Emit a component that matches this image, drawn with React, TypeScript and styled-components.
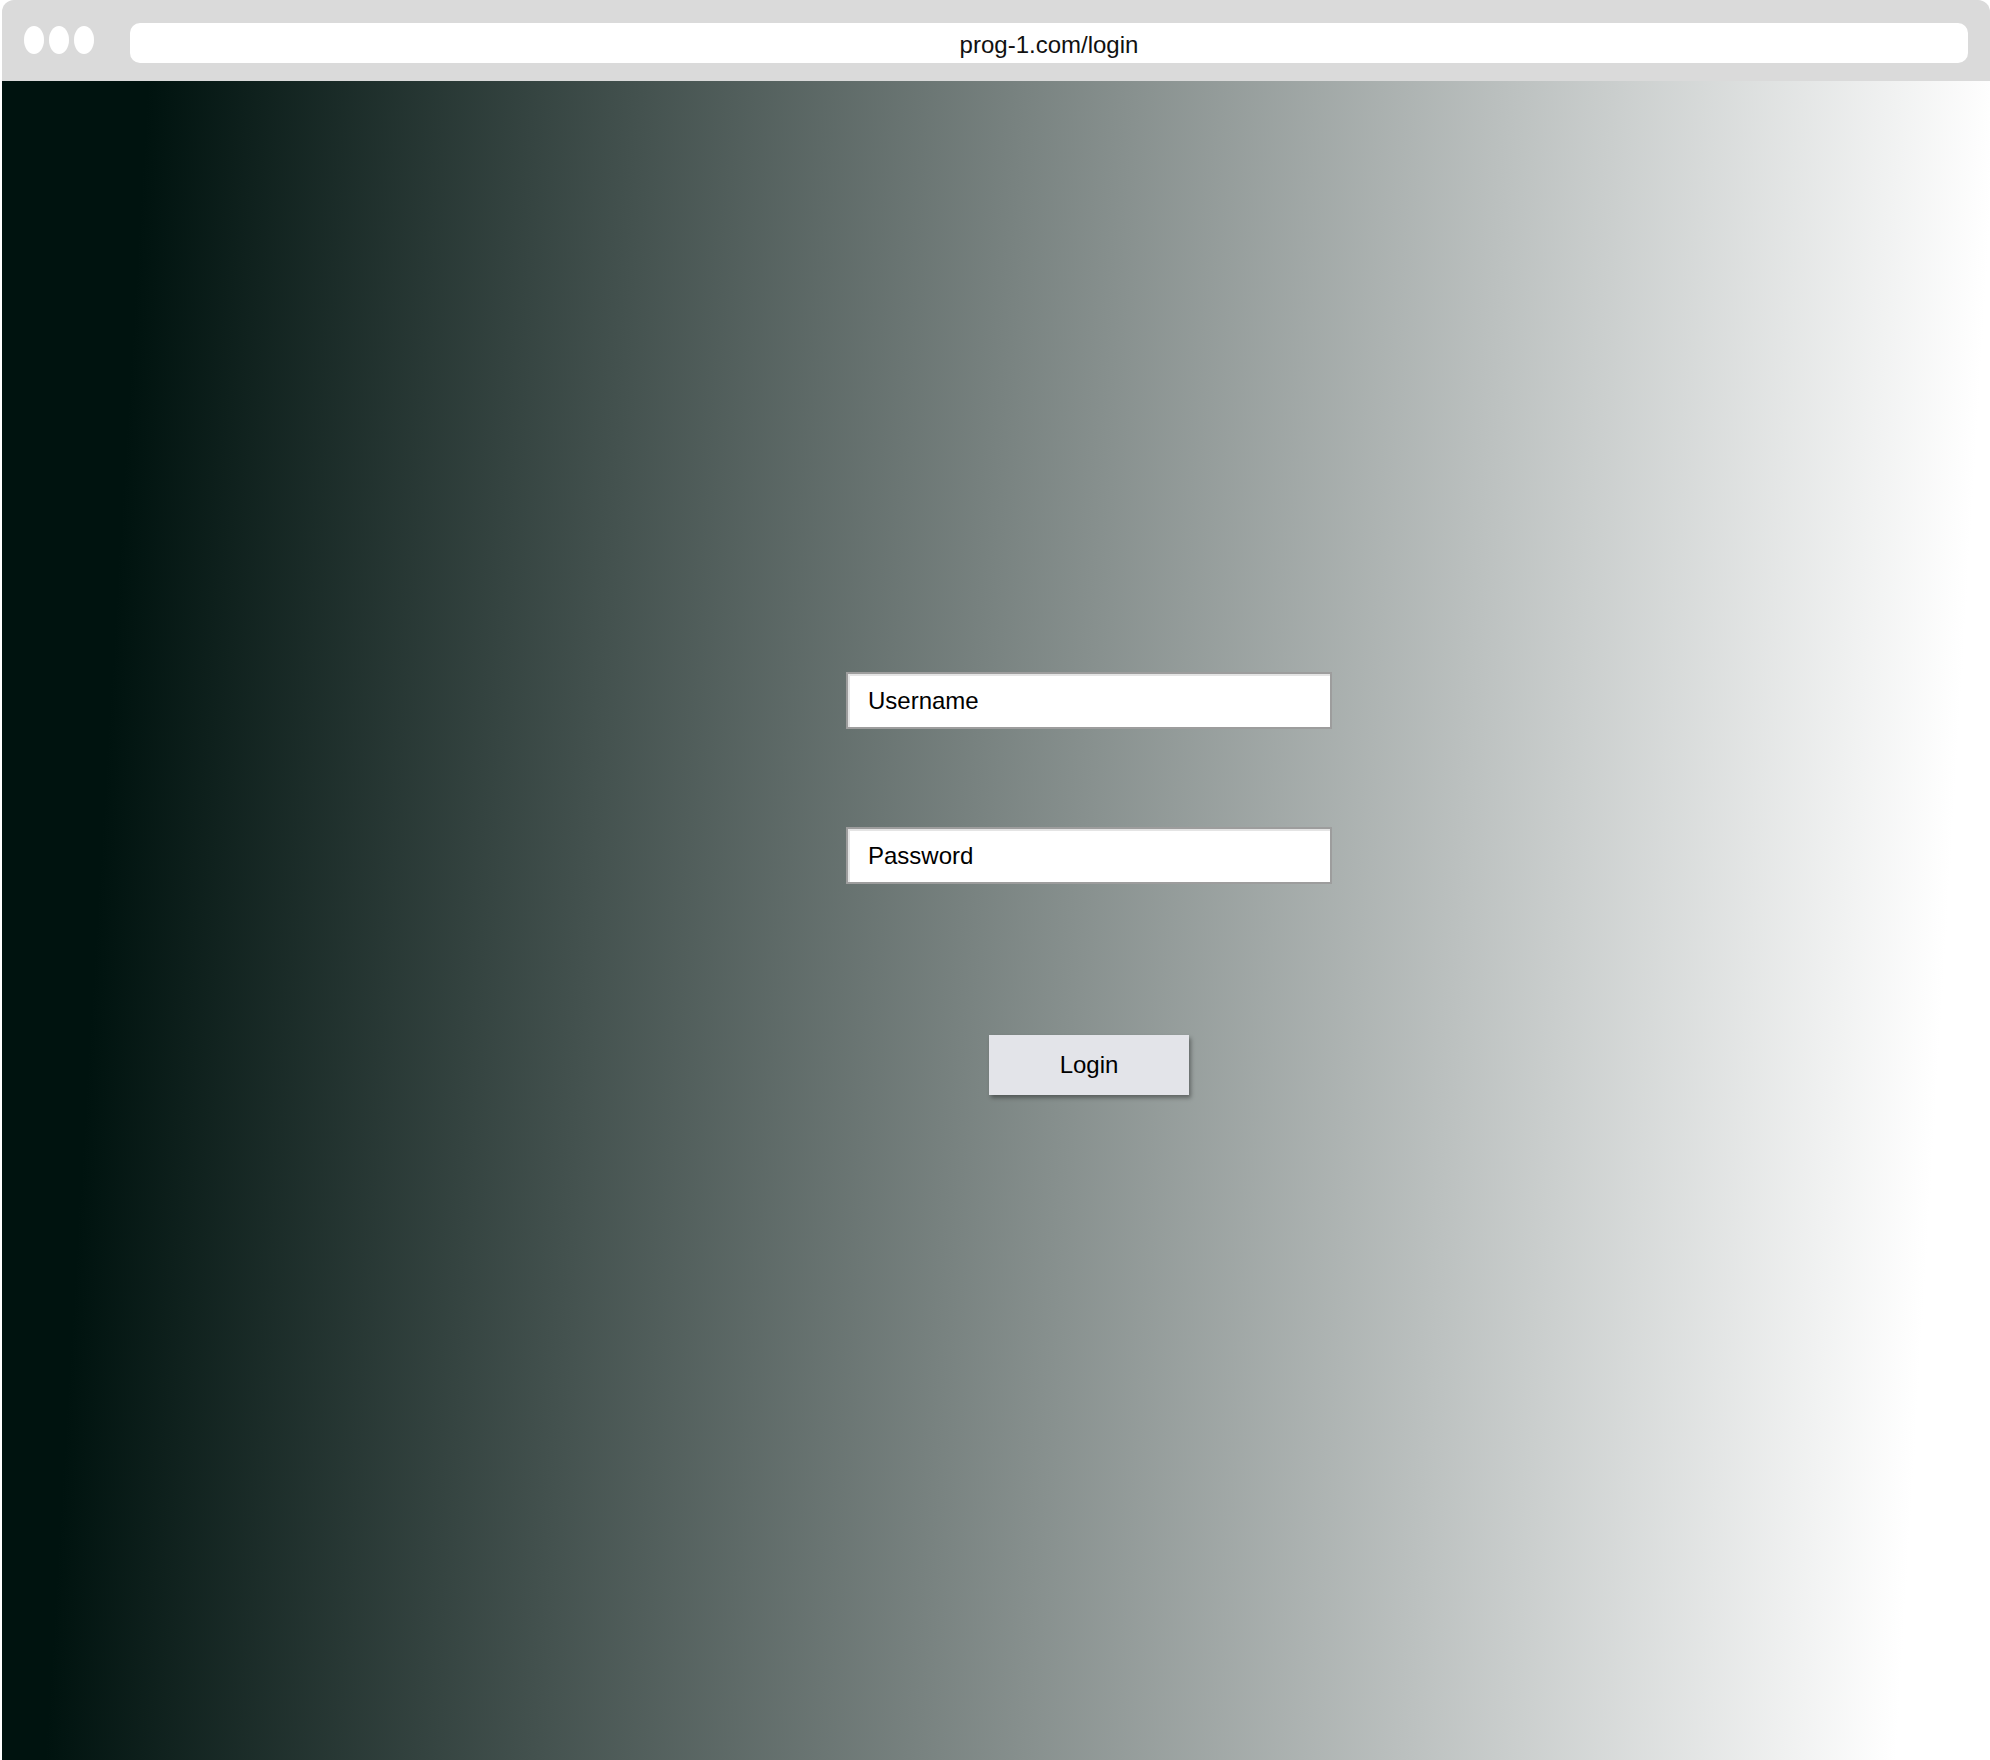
import React from 'react';
import styled, { createGlobalStyle } from 'styled-components';

const GlobalStyle = createGlobalStyle`
  html, body {
    margin: 0;
    padding: 0;
    background: #ffffff;
    font-family: "Liberation Sans", Arial, sans-serif;
  }
  * {
    box-sizing: border-box;
  }
`;

const Frame = styled.div`
  margin-left: 2px;
  width: 1988px;
  height: 1760px;
  display: flex;
  flex-direction: column;
  border-radius: 12px 12px 0 0;
  overflow: hidden;
`;

const ChromeBar = styled.header`
  height: 81px;
  flex-shrink: 0;
  background: #dadada;
  display: flex;
  align-items: center;
  padding: 0 22px 0 22px;
  gap: 36px;
`;

const Dots = styled.div`
  display: flex;
  gap: 5px;
  margin-top: -2px;
`;

const Dot = styled.span`
  width: 20px;
  height: 28px;
  border-radius: 50%;
  background: #ffffff;
`;

const UrlBar = styled.div`
  flex: 1;
  height: 40px;
  margin-top: 4px;
  padding-top: 4px;
  border-radius: 10px;
  background: #ffffff;
  display: flex;
  align-items: center;
  justify-content: center;
  font-size: 24px;
  color: #111;
`;

const Main = styled.main`
  flex: 1;
  background: linear-gradient(93.5deg, #00130f 7%, #ffffff 95.5%);
  display: flex;
  justify-content: center;
  align-items: flex-start;
  padding: 591px 0 0 186px;
`;

const Form = styled.form`
  width: 486px;
  display: flex;
  flex-direction: column;
  align-items: center;
`;

const Field = styled.input<{ gapAfter: number }>`
  width: 100%;
  height: 57px;
  margin: 0 0 ${p => p.gapAfter}px;
  padding: 0 20px;
  border: 2px solid #9d9d9d;
  box-shadow: inset 2px 2px 0 #e4e4e4;
  background: #ffffff;
  font-family: "Liberation Sans", Arial, sans-serif;
  font-size: 24px;
  color: #000;
  outline: none;

  &::placeholder {
    color: #000;
    opacity: 1;
  }
`;

const LoginButton = styled.button`
  width: 200px;
  height: 60px;
  border: none;
  background: #e3e4e9;
  box-shadow: 2px 3px 4px rgba(0, 0, 0, 0.35);
  font-family: "Liberation Sans", Arial, sans-serif;
  font-size: 24px;
  color: #000;
  cursor: pointer;
`;

const App: React.FC = () => {
  return (
    <>
      <GlobalStyle />
      <Frame>
        <ChromeBar>
          <Dots>
            <Dot />
            <Dot />
            <Dot />
          </Dots>
          <UrlBar>prog-1.com/login</UrlBar>
        </ChromeBar>
        <Main>
          <Form onSubmit={e => e.preventDefault()}>
            <Field type="text" placeholder="Username" gapAfter={98} />
            <Field type="password" placeholder="Password" gapAfter={151} />
            <LoginButton type="submit">Login</LoginButton>
          </Form>
        </Main>
      </Frame>
    </>
  );
};

export default App;
